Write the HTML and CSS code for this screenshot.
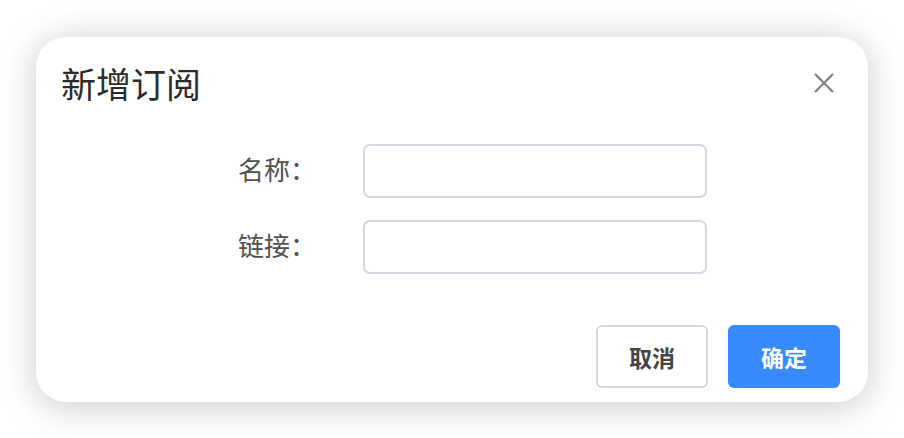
FILE: index.html
```html
<!DOCTYPE html>
<html lang="zh-CN">
<head>
<meta charset="utf-8">
<title>新增订阅</title>
<link rel="stylesheet" href="styles.css">
</head>
<body>
<div class="dialog">
  <div class="dialog-header">
    <div class="dialog-title">新增订阅</div>
    <button class="close-btn" aria-label="关闭">
      <svg width="20" height="20" viewBox="0 0 20 20"><path d="M1 1 L19 19 M19 1 L1 19" stroke="#7a7b80" stroke-width="2" fill="none"/></svg>
    </button>
  </div>
  <div class="form">
    <div class="form-row">
      <label class="form-label">名称：</label>
      <input class="form-input" type="text">
    </div>
    <div class="form-row">
      <label class="form-label">链接：</label>
      <input class="form-input" type="text">
    </div>
  </div>
  <div class="dialog-footer">
    <button class="btn btn-default">取消</button>
    <button class="btn btn-primary">确定</button>
  </div>
</div>
</body>
</html>
```
FILE: styles.css
```css
* { box-sizing: border-box; }
html, body { margin: 0; padding: 0; background: #ffffff; }
body {
  font-family: "Noto Sans CJK SC", "Noto Sans", sans-serif;
  padding: 37px 36px 36px 36px;
  min-height: 438px;
}
.dialog {
  width: 832px;
  height: 365px;
  background: #fff;
  border-radius: 30px;
  box-shadow: 0 4px 36px rgba(0, 0, 0, 0.22);
  display: flex;
  flex-direction: column;
  padding: 24px 28px 14px 25px;
}
.dialog-header {
  display: flex;
  align-items: center;
  justify-content: space-between;
  height: 49px;
}
.dialog-title {
  font-size: 35px;
  line-height: 49px;
  color: #2b2b2b;
  margin-top: -6px;
}
.close-btn {
  border: none;
  background: none;
  padding: 0;
  width: 20px;
  height: 20px;
  margin-right: 6px;
  margin-top: -6px;
  display: flex;
}
.form {
  margin-top: 34px;
  margin-left: 177px;
  display: flex;
  flex-direction: column;
  gap: 22px;
}
.form-row {
  display: flex;
  align-items: center;
}
.form-label {
  width: 125px;
  font-size: 26px;
  color: #505050;
  line-height: 54px;
  margin-top: -4px;
}
.form-input {
  width: 344px;
  height: 54px;
  border: 2px solid #d6d8e1;
  border-radius: 7px;
  background: #fff;
  outline: none;
}
.dialog-footer {
  margin-top: auto;
  display: flex;
  justify-content: flex-end;
  gap: 20px;
}
.btn {
  width: 112px;
  height: 63px;
  border-radius: 6px;
  font-family: inherit;
  font-size: 23px;
  font-weight: 700;
  padding: 0;
}
.btn-default {
  background: #fff;
  border: 2px solid #d6d8e1;
  color: #444;
}
.btn-primary {
  background: #398afe;
  border: none;
  color: #fff;
}
```
